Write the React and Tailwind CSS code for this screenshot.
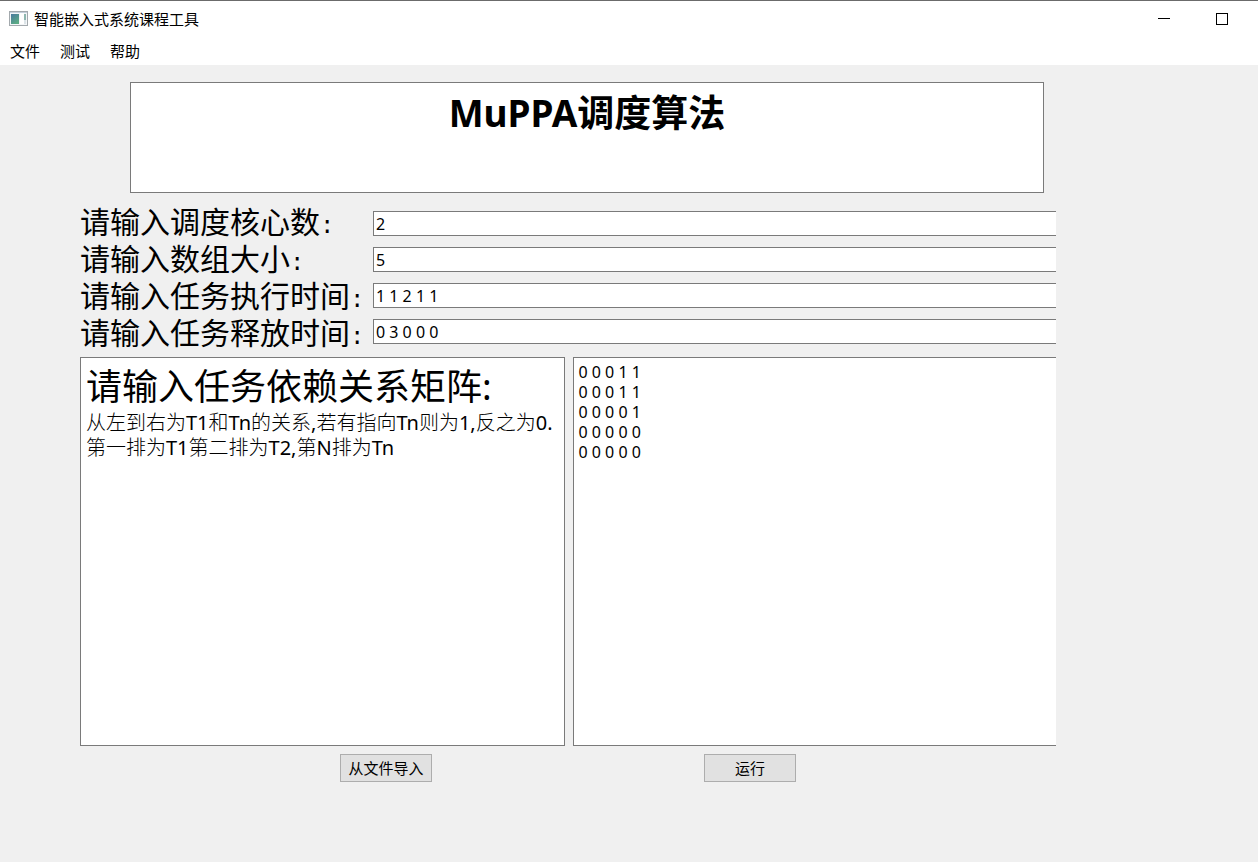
import React from "react";

const fields = [
  { id: "cores", label: "请输入调度核心数", value: "2" },
  { id: "size", label: "请输入数组大小", value: "5" },
  { id: "exec", label: "请输入任务执行时间", value: "1 1 2 1 1" },
  { id: "release", label: "请输入任务释放时间", value: "0 3 0 0 0" },
];

const matrix = ["0 0 0 1 1", "0 0 0 1 1", "0 0 0 0 1", "0 0 0 0 0", "0 0 0 0 0"].join("\n");

const notes = [
  "从左到右为T1和Tn的关系,若有指向Tn则为1,反之为0.",
  "第一排为T1第二排为T2,第N排为Tn",
];

// Chinese text is set light, Latin letters, digits and punctuation at normal weight.
function MixedText({ text }) {
  return text.split(/([\x20-\x7e]+)/).map((part, i) =>
    i % 2 === 1 ? (
      <span key={i} className="font-normal">
        {part}
      </span>
    ) : (
      part
    )
  );
}

function AppIcon() {
  return (
    <svg width="19" height="15" viewBox="0 0 19 15" aria-hidden="true">
      <defs>
        <linearGradient id="pane" x1="0" y1="0" x2="0.6" y2="1">
          <stop offset="0" stopColor="#4a7aa0" />
          <stop offset="1" stopColor="#5cab84" />
        </linearGradient>
      </defs>
      <rect x="0.5" y="0.5" width="18" height="14" fill="#f4f6f8" stroke="#a3a9ad" />
      <rect x="1" y="1" width="17" height="1" fill="#c5d0dc" />
      <rect x="2" y="3" width="8" height="10" fill="url(#pane)" />
      <rect x="11" y="2" width="4" height="11" fill="#ffffff" />
      <rect x="15" y="3" width="2" height="6" fill="#8fb7b0" />
      <rect x="15" y="9" width="2" height="4" fill="#dce4e8" />
    </svg>
  );
}

function TitleBar() {
  return (
    <header className="flex h-9 items-center border-t border-[#6b6b6b] pl-[9px] pr-[30px]">
      <AppIcon />
      <h1 className="ml-1.5 flex-1 text-[15px] leading-5">智能嵌入式系统课程工具</h1>
      <div className="flex gap-[46px]">
        <button type="button" aria-label="最小化">
          <svg width="12" height="12" viewBox="0 0 12 12" aria-hidden="true">
            <path d="M0 5.5H12" stroke="#000" fill="none" />
          </svg>
        </button>
        <button type="button" aria-label="最大化">
          <svg width="12" height="12" viewBox="0 0 12 12" aria-hidden="true">
            <rect x="0.5" y="0.5" width="11" height="11" stroke="#000" fill="none" />
          </svg>
        </button>
      </div>
    </header>
  );
}

function MenuBar() {
  return (
    <nav className="flex h-[29px] items-center gap-5 px-2.5">
      {["文件", "测试", "帮助"].map((item) => (
        <button key={item} type="button" className="text-[15px] leading-5">
          {item}
        </button>
      ))}
    </nav>
  );
}

export default function App() {
  return (
    <div className="flex min-h-screen flex-col bg-[#f0f0f0] font-['Noto_Sans','Noto_Sans_CJK_SC',sans-serif] text-black">
      <div className="bg-white">
        <TitleBar />
        <MenuBar />
      </div>

      <main className="flex flex-1 flex-col pb-20 pl-20 pr-[202px] pt-[17px]">
        <div className="ml-[50px] mr-3 h-[111px] border border-[#7a7a7a] bg-white pt-1 text-center">
          <h2 className="text-[37px] font-bold leading-[52px]">MuPPA调度算法</h2>
        </div>

        <form className="mt-2.5 flex">
          <div className="flex w-[293px] flex-col">
            {fields.map((f) => (
              <label
                key={f.id}
                htmlFor={f.id}
                className="block h-[37px] whitespace-nowrap text-[30px] leading-[37px]"
              >
                {f.label}
                <span className="font-['Liberation_Mono',monospace] text-2xl leading-none">:</span>
              </label>
            ))}
          </div>
          <div className="flex flex-1 flex-col gap-[11px] pt-2">
            {fields.map((f) => (
              <input
                key={f.id}
                id={f.id}
                type="text"
                defaultValue={f.value}
                className="h-[25px] w-full border border-r-0 border-[#7a7a7a] bg-white px-0.5 text-base leading-5 outline-none"
              />
            ))}
          </div>
        </form>

        <div className="mt-1.5 flex flex-1 gap-2">
          <section className="flex-1 border border-[#7a7a7a] bg-white px-[5px] pt-1.5">
            <label htmlFor="matrix" className="block whitespace-nowrap text-[36px] leading-[46px]">
              请输入任务依赖关系矩阵:
            </label>
            {notes.map((line) => (
              <p key={line} className="whitespace-nowrap text-xl font-light leading-[25px]">
                <MixedText text={line} />
              </p>
            ))}
          </section>
          <textarea
            id="matrix"
            defaultValue={matrix}
            className="flex-1 resize-none border border-r-0 border-[#7a7a7a] bg-white px-[5px] py-1 text-base leading-5 outline-none"
          />
        </div>

        <div className="mt-2 flex justify-evenly gap-3">
          {["从文件导入", "运行"].map((text) => (
            <button
              key={text}
              type="button"
              className="h-7 w-[92px] border border-[#adadad] bg-[#e1e1e1] text-[15px] leading-5"
            >
              {text}
            </button>
          ))}
        </div>
      </main>
    </div>
  );
}
